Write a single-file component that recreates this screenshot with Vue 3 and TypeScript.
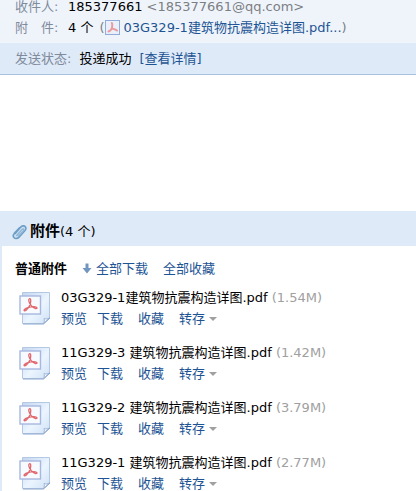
<script setup lang="ts">
interface Attachment {
  name: string
  size: string
}

const recipient = { name: '185377661', address: '<185377661@qq.com>' }

const attachments: Attachment[] = [
  { name: '03G329-1建筑物抗震构造详图.pdf', size: '1.54M' },
  { name: '11G329-3 建筑物抗震构造详图.pdf', size: '1.42M' },
  { name: '11G329-2 建筑物抗震构造详图.pdf', size: '3.79M' },
  { name: '11G329-1 建筑物抗震构造详图.pdf', size: '2.77M' },
]
</script>

<template>
  <main class="mail">
    <header class="summary">
      <div class="row recipient">
        <span class="label">收件人:</span>
        <span>{{ recipient.name }} <span class="muted">{{ recipient.address }}</span></span>
      </div>
      <div class="row">
        <span class="label">附　件:</span>
        <span>{{ attachments.length }} 个</span>
        <span class="file">
          <span class="muted">(</span>
          <svg class="mini" viewBox="0 0 15 15" aria-hidden="true">
            <rect x="0.5" y="0.5" width="14" height="14" fill="#e9effb" stroke="#93abd8" />
            <path d="M6.8 3C7.8 4 7.2 6 7 7.8C6.5 9.5 5 11 3.5 11.5M7 8.5C8.5 9 10.5 9.2 12 10.5" fill="none" stroke="#ea9a9c" stroke-width="2" stroke-linecap="round" />
          </svg>
          <a href="#attachments">{{ attachments[0].name }}...</a><span class="muted">)</span>
        </span>
      </div>
    </header>

    <section class="status">
      <span class="label">发送状态:</span>
      <span>投递成功</span>
      <a href="#details">[查看详情]</a>
    </section>

    <section id="attachments" class="panel">
      <header class="panel-head">
        <svg class="clip" viewBox="0 0 15 16" aria-hidden="true">
          <path d="M3.2 9.5L8.5 3.3C10 1.6 12.2 1.4 13.2 2.6C14.3 3.8 13.9 5.4 12.8 6.7L7 13.1C5.4 14.8 3.2 14.9 2.1 13.7C0.9 12.5 1.1 10.8 2.3 9.4L7.5 3.8" fill="#c9e0f2" stroke="#6d9dc5" stroke-width="1.6" stroke-linecap="round" />
          <path d="M4.7 11.5L9.8 5.6C10.5 4.8 11.5 4.8 11.7 5.5C11.9 6 11.5 6.7 11 7.3L6.5 12" fill="none" stroke="#8db5d6" stroke-width="1.4" stroke-linecap="round" />
        </svg>
        <h2>附件</h2><span>({{ attachments.length }} 个)</span>
      </header>

      <div class="panel-body">
        <div class="bulk">
          <h3>普通附件</h3>
          <a class="all" href="#download-all">
            <svg class="down" viewBox="0 0 10 11" aria-hidden="true">
              <path d="M3.5 0.5H6.5V5H9.5L5 10.5L0.5 5H3.5Z" fill="#7095bf" />
            </svg>全部下载</a>
          <a href="#save-all">全部收藏</a>
        </div>

        <ul class="files">
          <li v-for="item in attachments" :key="item.name">
            <svg class="doc" viewBox="0 0 32 34" aria-hidden="true">
              <defs>
                <linearGradient id="page" x1="0" y1="0" x2="1" y2="1">
                  <stop offset="0" stop-color="#c3d6f0" />
                  <stop offset="0.55" stop-color="#ebf5ff" />
                  <stop offset="1" stop-color="#cfe0f4" />
                </linearGradient>
              </defs>
              <path d="M3.5 1.5H30.5V27L24.5 32.5H3.5Z" fill="url(#page)" stroke="#b5c8e3" />
              <path d="M4 33H24.5L31 27" fill="none" stroke="#8ea8cf" />
              <path d="M24.5 32.5C25.5 31 25.5 29 25 27.5C27 28.3 29 28 30.5 26.8Z" fill="#f8fbff" stroke="#8fa8cf" stroke-width="0.8" />
              <rect x="1" y="5" width="20.5" height="18" fill="#f7faff" stroke="#a7b7df" stroke-width="1.4" />
              <path d="M10.2 7.8C11.8 7.1 12 9.2 11.5 12C10.8 15.5 7.8 19.3 5.6 19.8C4 19.5 5.8 17.5 9 16.6C12.5 15.6 17.3 15.2 18 16.8C18.2 18.2 14.5 17.6 12.3 14.7C10.5 12.2 9.2 9 10.2 7.8" fill="none" stroke="#e0686c" stroke-width="1.3" stroke-linejoin="round" />
            </svg>
            <div>
              <div class="name">{{ item.name }} <span class="size">({{ item.size }})</span></div>
              <div class="actions">
                <a class="preview" href="#preview">预览</a>
                <a href="#download">下载</a>
                <a href="#save">收藏</a>
                <button type="button">转存<span class="caret"></span></button>
              </div>
            </div>
          </li>
        </ul>
      </div>
    </section>
  </main>
</template>

<style>
body {
  background: #fff;
}
</style>

<style scoped>
.mail {
  font: 13px/21px "DejaVu Sans", "Noto Sans CJK SC", sans-serif;
  color: #000;
  white-space: nowrap;
}
a {
  color: #1e5494;
  text-decoration: none;
}
h2,
h3 {
  margin: 0;
  font-weight: bold;
}
h2 {
  font-size: 15px;
}
h3 {
  font-size: 13px;
}
.summary {
  padding: 0 15px 5px;
  background: #eff4fb;
}
.row {
  display: flex;
}
.recipient {
  line-height: 13px;
  padding-bottom: 4px;
}
.row .label {
  width: 53px;
}
.label {
  color: #7f8b9c;
}
.muted {
  color: #7c7f84;
}
.size {
  color: #a0a0a0;
}
.file {
  display: flex;
  align-items: center;
  margin-left: 6px;
}
.mini {
  width: 15px;
  height: 15px;
  margin: 0 3px 0 1px;
}
.status {
  display: flex;
  gap: 8px;
  padding: 5px 15px;
  background: #dfeaf8;
  border-bottom: 1px solid #a7c1df;
}
.panel {
  margin-top: 136px;
  border-left: 2px solid #dfeaf8;
}
.panel-head {
  display: flex;
  align-items: center;
  padding: 10px 10px 4px;
  background: #dfeaf8;
}
.clip {
  width: 15px;
  height: 16px;
  margin-right: 3px;
}
.panel-body {
  padding: 12px 13px 0;
}
.bulk {
  display: flex;
  gap: 15px;
}
.all {
  display: flex;
  align-items: center;
}
.down {
  width: 10px;
  height: 11px;
  margin-right: 4px;
}
.files {
  list-style: none;
  margin: 0;
  padding: 8px 0 0;
}
.files li {
  display: flex;
  height: 55px;
}
.doc {
  flex: none;
  width: 32px;
  height: 34px;
  margin: 4px 10px 0 4px;
}
.actions {
  display: flex;
  gap: 15px;
}
.actions .preview {
  margin-right: -5px;
}
button {
  display: flex;
  align-items: center;
  gap: 4px;
  padding: 0;
  border: 0;
  background: none;
  color: #1e5494;
  font: inherit;
}
.caret {
  border: 4px solid transparent;
  border-top-color: #a0a0a0;
  border-bottom: 0;
}
</style>
